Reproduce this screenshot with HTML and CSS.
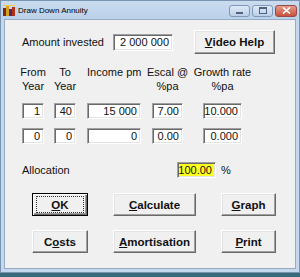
FILE: index.html
```html
<!DOCTYPE html>
<html lang="en">
<head>
  <meta charset="UTF-8">
  <title>Draw Down Annuity</title>
  <link rel="stylesheet" href="styles.css">
</head>
<body>
<div class="window">
  <!-- Title bar -->
  <div class="titlebar">
    <svg class="app-icon" width="12" height="11" viewBox="0 0 12 11">
      <rect x="0" y="3" width="3" height="8" fill="#7a2a10"/>
      <rect x="3" y="1" width="3" height="10" fill="#d8a020"/>
      <rect x="6" y="4" width="3" height="7" fill="#4a2a60"/>
      <rect x="9" y="2" width="3" height="9" fill="#b03018"/>
      <rect x="0" y="0" width="12" height="1" fill="#f0d040"/>
    </svg>
    <span class="title">Draw Down Annuity</span>
    <div class="caption-buttons">
      <span class="cap-btn cap-min"></span>
      <span class="cap-btn cap-max"></span>
      <span class="cap-btn cap-close">
        <svg width="9" height="7" viewBox="0 0 9 7"><path d="M1 0.5 L8 6.5 M8 0.5 L1 6.5" stroke="#fff" stroke-width="1.6"/></svg>
      </span>
    </div>
  </div>

  <div class="client">
    <div class="amount-row">
      <span class="amount-label">Amount invested</span>
      <input class="field amount" value="2 000 000" readonly>
      <button class="btn video-btn"><u>V</u>ideo Help</button>
    </div>

    <!-- Annuity table -->
    <div class="table">
      <div class="head col-from"><span>From<br>Year</span></div>
      <div class="head col-to"><span>To<br>Year</span></div>
      <div class="head head-left col-income"><span>Income pm</span></div>
      <div class="head col-escal"><span>Escal @<br>%pa</span></div>
      <div class="head col-growth"><span>Growth rate<br>%pa</span></div>

      <input class="field col-from" value="1" readonly>
      <input class="field col-to" value="40" readonly>
      <input class="field col-income" value="15 000" readonly>
      <input class="field col-escal" value="7.00" readonly>
      <input class="field col-growth" value="10.000" readonly>

      <input class="field col-from" value="0" readonly>
      <input class="field col-to" value="0" readonly>
      <input class="field col-income" value="0" readonly>
      <input class="field col-escal" value="0.00" readonly>
      <input class="field col-growth" value="0.000" readonly>
    </div>

    <div class="alloc-row">
      <span class="alloc-label">Allocation</span>
      <input class="field alloc" value="100.00" readonly>
      <span class="pct">%</span>
    </div>

    <div class="actions">
      <button class="btn btn-default"><span class="focus"><u>O</u>K</span></button>
      <button class="btn"><u>C</u>alculate</button>
      <button class="btn"><u>G</u>raph</button>
      <button class="btn">C<u>o</u>sts</button>
      <button class="btn"><u>A</u>mortisation</button>
      <button class="btn"><u>P</u>rint</button>
    </div>
  </div>
</div>
</body>
</html>
```

FILE: styles.css
```css
body {
  margin: 0;
  padding: 0;
  background: #3a6b7c;
  font-family: "Liberation Sans", Arial, sans-serif;
  font-size: 11px;
  color: #111;
}

/* Window frame */
.window {
  width: 300px;
  height: 273px;
  box-sizing: border-box;
  border: 1px solid #7a93b0;
  background: #c4d7ec;
  display: flex;
  flex-direction: column;
}

.titlebar {
  height: 18px;
  display: flex;
  align-items: center;
  padding: 0 2px 0 2px;
  background: linear-gradient(#c9dbef, #bcd1ea);
}

.app-icon {
  margin-right: 3px;
}

.title {
  font-size: 8px;
  color: #000;
}

.caption-buttons {
  margin-left: auto;
  display: flex;
  gap: 2px;
  margin-top: 1px;
}

.cap-btn {
  width: 19px;
  height: 10px;
  border: 1px solid #8098b8;
  border-radius: 3px;
  background: linear-gradient(#dfe9f6, #bccfe7);
  position: relative;
  display: flex;
  align-items: center;
  justify-content: center;
}

.cap-min::after {
  content: "";
  position: absolute;
  left: 6px;
  bottom: 2px;
  width: 7px;
  height: 2px;
  background: #4d6585;
}

.cap-max::after {
  content: "";
  width: 6px;
  height: 4px;
  border: 1px solid #4d6585;
  border-top-width: 2px;
}

.cap-close {
  width: 20px;
  border-color: #9a4a44;
  background: linear-gradient(#e49b8c, #c9503c);
}

/* Client area */
.client {
  flex: 1;
  margin: 0 3px 3px 3px;
  border: 1px solid #95abc6;
  background: #f0f0f0;
  padding: 10px 0 0 17px;
}

.field {
  box-sizing: border-box;
  height: 16px;
  margin: 0;
  padding: 0 3px 0 0;
  font-family: "Liberation Sans", Arial, sans-serif;
  font-size: 11px;
  color: #111;
  text-align: right;
  background: #fff;
  border: 1px solid;
  border-color: #a0a0a0 #fff #fff #a0a0a0;
  box-shadow: inset 1px 1px 0 #696969, inset -1px -1px 0 #e3e3e3;
  outline: none;
}

.btn {
  box-sizing: border-box;
  margin: 0;
  padding: 0;
  font-family: "Liberation Sans", Arial, sans-serif;
  font-size: 11.5px;
  font-weight: bold;
  color: #111;
  background: #f0f0f0;
  border: 1px solid;
  border-color: #fff #696969 #696969 #fff;
  box-shadow: inset -1px -1px 0 #a0a0a0, inset 1px 1px 0 #e3e3e3;
  display: flex;
  align-items: center;
  justify-content: center;
}

.btn u {
  text-decoration-thickness: 1px;
  text-underline-offset: 1px;
}

.amount-row {
  display: flex;
  align-items: center;
  height: 24px;
}

.amount-label {
  width: 91px;
}

.amount {
  width: 60px;
  height: 17px;
}

.video-btn {
  width: 81px;
  height: 24px;
  margin-left: 21px;
}

/* Table of inputs */
.table {
  margin-top: 11px;
  display: grid;
  grid-template-columns: 22px 10px 22px 11px 54px 11px 31px 20px 39px;
  grid-template-rows: 29px 16px 16px;
  row-gap: 9px;
}

.head {
  display: flex;
  justify-content: center;
  line-height: 14px;
  text-align: center;
  white-space: nowrap;
}

.head-left {
  justify-content: flex-start;
}

.col-from { grid-column: 1; }
.col-to { grid-column: 3; }
.col-income { grid-column: 5; }
.col-escal { grid-column: 7; }
.col-growth { grid-column: 9; }

.table .field {
  width: 100%;
}

.alloc-row {
  margin-top: 18px;
  display: flex;
  align-items: center;
  height: 16px;
}

.alloc-label {
  width: 155px;
}

.alloc {
  width: 39px;
  background: #ffff20;
}

.pct {
  margin-left: 5px;
}

/* Bottom buttons */
.actions {
  margin: 15px 0 0 10px;
  display: grid;
  grid-template-columns: 56px 83px 55px;
  grid-auto-rows: 23px;
  column-gap: 25px;
  row-gap: 14px;
}

.btn-default {
  border: 1px solid #000;
  box-shadow: inset 1px 1px 0 #fff, inset -1px -1px 0 #696969, inset -2px -2px 0 #a0a0a0;
}

.focus {
  display: flex;
  align-items: center;
  justify-content: center;
  width: 46px;
  height: 15px;
  border: 1px dotted #333;
}
```
